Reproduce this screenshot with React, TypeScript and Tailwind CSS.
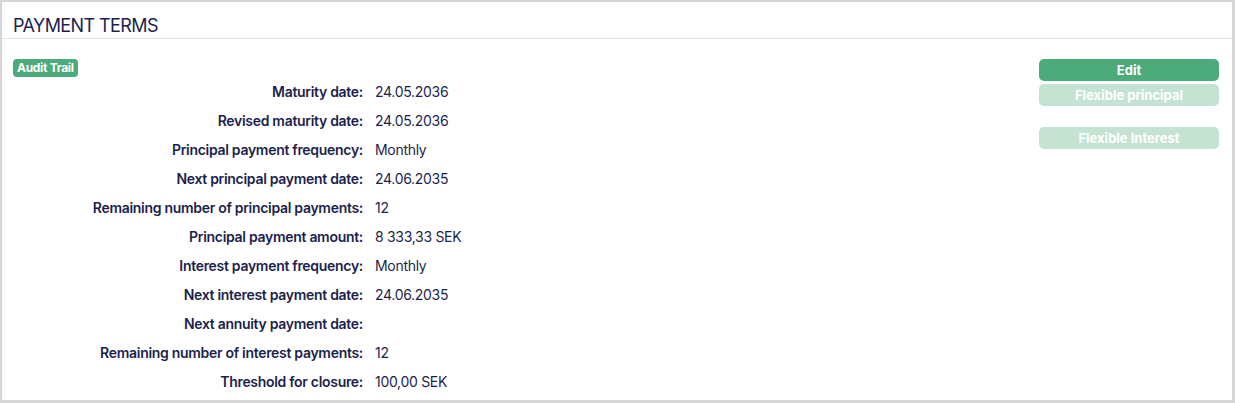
import React from "react";

const rows: [string, string][] = [
  ["Maturity date:", "24.05.2036"],
  ["Revised maturity date:", "24.05.2036"],
  ["Principal payment frequency:", "Monthly"],
  ["Next principal payment date:", "24.06.2035"],
  ["Remaining number of principal payments:", "12"],
  ["Principal payment amount:", "8 333,33 SEK"],
  ["Interest payment frequency:", "Monthly"],
  ["Next interest payment date:", "24.06.2035"],
  ["Next annuity payment date:", ""],
  ["Remaining number of interest payments:", "12"],
  ["Threshold for closure:", "100,00 SEK"],
];

export default function App() {
  return (
    <div
      className="w-[1235px] h-[403px] bg-[#d6d6d6] pt-[2px] pl-[2px] pr-[3px] pb-[3px] text-[#1c1f4d]"
      style={{ fontFamily: "Inter, 'Noto Sans', sans-serif" }}
    >
      <div className="bg-white h-full flex flex-col">
        <div className="h-[37px] flex items-center pt-[11px] px-[11px] border-b border-[#e2e2e2]">
          <span className="text-[18px] leading-none tracking-[-0.6px]">PAYMENT TERMS</span>
        </div>
        <div className="flex pl-[11px] pr-[13px] pt-[20px]">
          <div className="flex-1 flex flex-col">
            <div className="flex">
              <span className="h-[18px] px-[4px] flex items-center rounded-[4px] bg-[#4caa7b] text-white text-[12px] font-bold leading-none tracking-[-0.3px]">
                Audit Trail
              </span>
            </div>
            <div className="flex flex-col">
              {rows.map(([l, v]) => (
                <div key={l} className="h-[29px] flex items-center text-[14px] tracking-[-0.3px]">
                  <div className="w-[350px] text-right font-semibold">{l}</div>
                  <div className="ml-[12px]">{v}</div>
                </div>
              ))}
            </div>
          </div>
          <div className="w-[180px] flex flex-col">
            <div className="h-[22px] pt-[1px] rounded-[5px] bg-[#4caa7b] text-white text-[13px] font-bold flex items-center justify-center">
              Edit
            </div>
            <div className="mt-[3px] h-[22px] pt-[1px] rounded-[5px] bg-[#c5e3d3] text-white text-[13px] font-bold flex items-center justify-center">
              Flexible principal
            </div>
            <div className="mt-[21px] h-[22px] pt-[1px] rounded-[5px] bg-[#c5e3d3] text-white text-[13px] font-bold flex items-center justify-center">
              Flexible Interest
            </div>
          </div>
        </div>
      </div>
    </div>
  );
}
